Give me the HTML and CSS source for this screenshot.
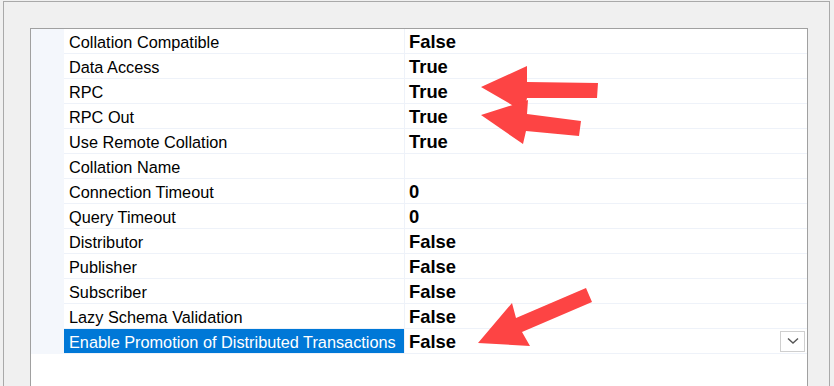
FILE: index.html
```html
<!DOCTYPE html>
<html lang="en">
<head>
    <meta charset="UTF-8">
    <title>Linked Server Options</title>
    <link rel="stylesheet" href="styles.css">
</head>
<body>
    <div class="frame">
        <div class="grid-panel">
            <div class="row"><div class="margin"></div><div class="name">Collation Compatible</div><div class="value">False</div></div>
            <div class="row"><div class="margin"></div><div class="name">Data Access</div><div class="value">True</div></div>
            <div class="row"><div class="margin"></div><div class="name">RPC</div><div class="value">True</div></div>
            <div class="row"><div class="margin"></div><div class="name">RPC Out</div><div class="value">True</div></div>
            <div class="row"><div class="margin"></div><div class="name">Use Remote Collation</div><div class="value">True</div></div>
            <div class="row"><div class="margin"></div><div class="name">Collation Name</div><div class="value"></div></div>
            <div class="row"><div class="margin"></div><div class="name">Connection Timeout</div><div class="value">0</div></div>
            <div class="row"><div class="margin"></div><div class="name">Query Timeout</div><div class="value">0</div></div>
            <div class="row"><div class="margin"></div><div class="name">Distributor</div><div class="value">False</div></div>
            <div class="row"><div class="margin"></div><div class="name">Publisher</div><div class="value">False</div></div>
            <div class="row"><div class="margin"></div><div class="name">Subscriber</div><div class="value">False</div></div>
            <div class="row"><div class="margin"></div><div class="name">Lazy Schema Validation</div><div class="value">False</div></div>
            <div class="row selected"><div class="margin"></div><div class="name">Enable Promotion of Distributed Transactions</div><div class="value">False
                <span class="drop-btn">
                    <svg viewBox="0 0 12 8" width="12" height="8"><path d="M1 1.5 L6 6 L11 1.5" fill="none" stroke="#555" stroke-width="1.4"/></svg>
                </span>
            </div></div>
        </div>
    </div>

    <!-- annotation arrows drawn over the screenshot -->
    <svg class="arrows" viewBox="0 0 834 386" width="834" height="386">
        <polygon points="481,87 527,66 527,82 598,83 597,98 527,98 524,112"/>
        <polygon points="481,115 528,100 527,114 581,121 579,136 526,131 523,144"/>
        <polygon points="478,343 512,303 516,318 586,288 592,302 522,332 530,346"/>
    </svg>
</body>
</html>
```

FILE: styles.css
```css
* {
    box-sizing: border-box;
}

body {
    margin: 0;
    padding: 1px 4px 0 3px;
    height: 386px;
    overflow: hidden;
    background: #f0f0f0;
    font-family: 'Liberation Sans', Arial, sans-serif;
    position: relative;
}

.frame {
    border-left: 1px solid #a9a9a9;
    border-top: 1px solid #a9a9a9;
    border-right: 1px solid #a9a9a9;
    height: 385px;
    padding: 26px 21px 0 26px;
}

.grid-panel {
    background: #fff;
    border: 1px solid #a0a0a0;
    border-bottom: none;
    height: 358px;
}

.row {
    display: grid;
    grid-template-columns: 33px 341px 1fr;
    height: 25px;
}

.margin {
    background: #f4f7fc;
}

.name,
.value {
    display: flex;
    align-items: center;
    padding-top: 2px;
    border-bottom: 1px solid #eef2f9;
    white-space: nowrap;
    color: #000;
}

.name {
    padding-left: 5px;
    font-size: 16.3px;
    border-right: 1px solid #eef2f9;
}

.value {
    padding-left: 4px;
    padding-right: 2px;
    font-size: 18.4px;
    font-weight: bold;
}

.selected .name {
    background: #0078d7;
    color: #fff;
}

.drop-btn {
    margin-left: auto;
    width: 25px;
    height: 21px;
    margin-top: -2px;
    border: 1px solid #cfcfcf;
    background: #fff;
    display: flex;
    align-items: center;
    justify-content: center;
}

.arrows {
    position: absolute;
    left: 0;
    top: 0;
    pointer-events: none;
}

.arrows polygon {
    fill: #fd4444;
}
```
